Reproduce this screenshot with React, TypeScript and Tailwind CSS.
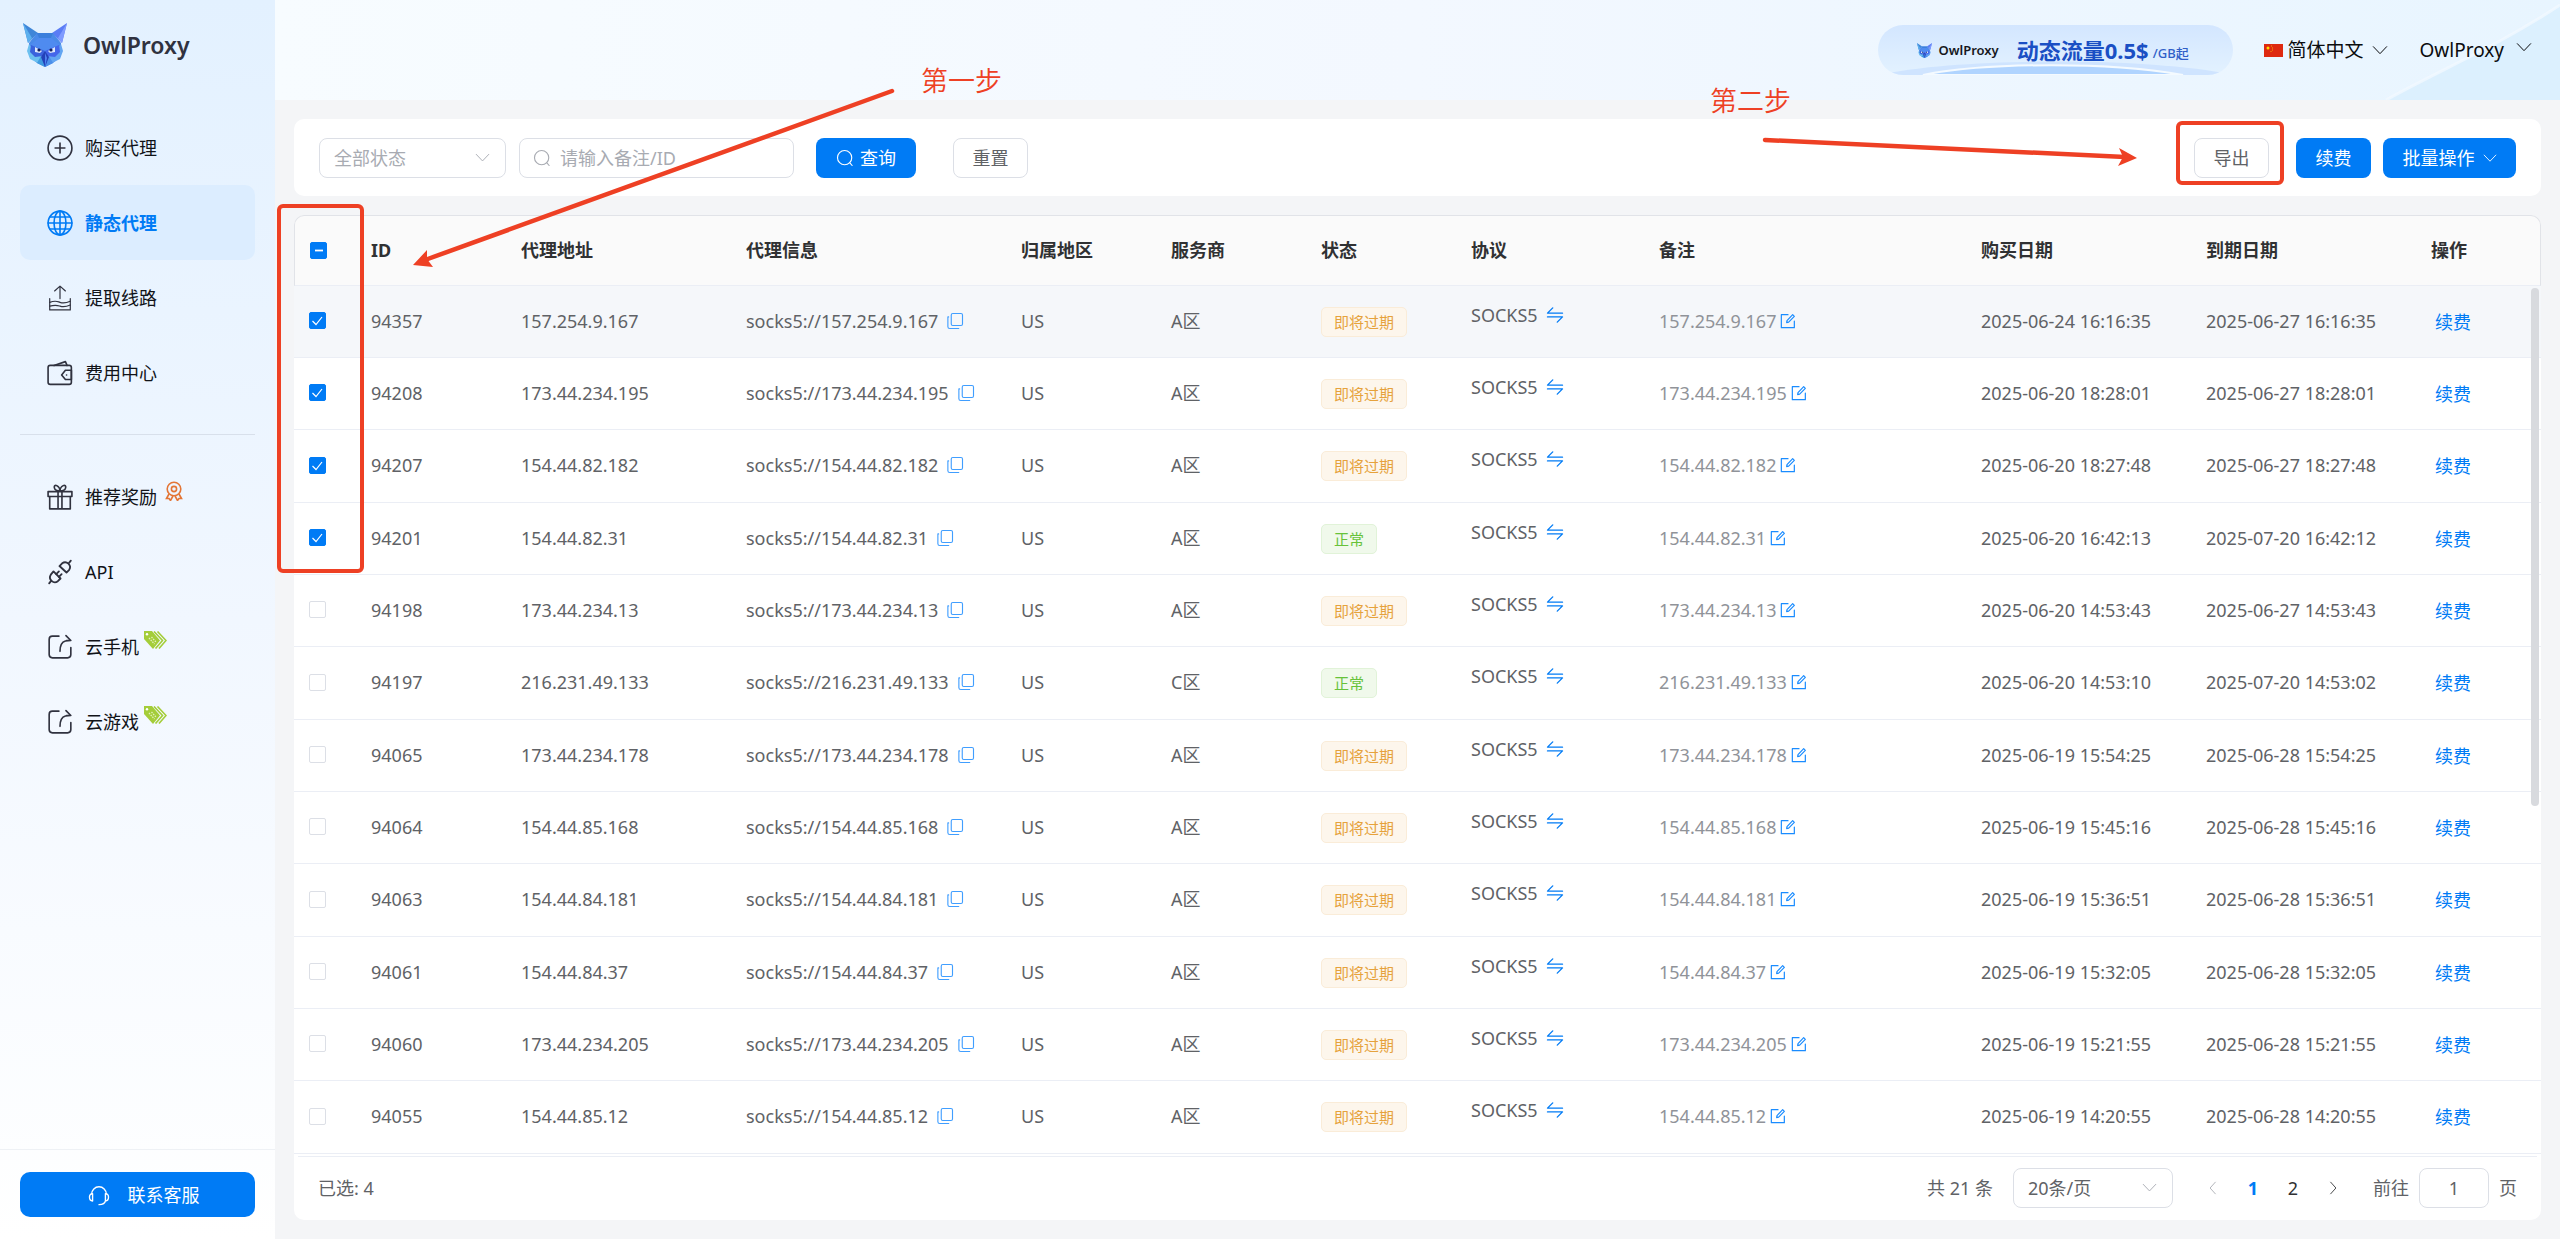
import clsx from "clsx";
import { useState } from "react";
import type { ReactNode } from "react";

type Status = "expiring" | "normal";

interface Proxy {
  id: number;
  ip: string;
  zone: string;
  status: Status;
  bought: string;
  expires: string;
}

const PROXIES: Proxy[] = [
  { id: 94357, ip: "157.254.9.167", zone: "A区", status: "expiring", bought: "2025-06-24 16:16:35", expires: "2025-06-27 16:16:35" },
  { id: 94208, ip: "173.44.234.195", zone: "A区", status: "expiring", bought: "2025-06-20 18:28:01", expires: "2025-06-27 18:28:01" },
  { id: 94207, ip: "154.44.82.182", zone: "A区", status: "expiring", bought: "2025-06-20 18:27:48", expires: "2025-06-27 18:27:48" },
  { id: 94201, ip: "154.44.82.31", zone: "A区", status: "normal", bought: "2025-06-20 16:42:13", expires: "2025-07-20 16:42:12" },
  { id: 94198, ip: "173.44.234.13", zone: "A区", status: "expiring", bought: "2025-06-20 14:53:43", expires: "2025-06-27 14:53:43" },
  { id: 94197, ip: "216.231.49.133", zone: "C区", status: "normal", bought: "2025-06-20 14:53:10", expires: "2025-07-20 14:53:02" },
  { id: 94065, ip: "173.44.234.178", zone: "A区", status: "expiring", bought: "2025-06-19 15:54:25", expires: "2025-06-28 15:54:25" },
  { id: 94064, ip: "154.44.85.168", zone: "A区", status: "expiring", bought: "2025-06-19 15:45:16", expires: "2025-06-28 15:45:16" },
  { id: 94063, ip: "154.44.84.181", zone: "A区", status: "expiring", bought: "2025-06-19 15:36:51", expires: "2025-06-28 15:36:51" },
  { id: 94061, ip: "154.44.84.37", zone: "A区", status: "expiring", bought: "2025-06-19 15:32:05", expires: "2025-06-28 15:32:05" },
  { id: 94060, ip: "173.44.234.205", zone: "A区", status: "expiring", bought: "2025-06-19 15:21:55", expires: "2025-06-28 15:21:55" },
  { id: 94055, ip: "154.44.85.12", zone: "A区", status: "expiring", bought: "2025-06-19 14:20:55", expires: "2025-06-28 14:20:55" },
];

const HEADINGS = ["ID", "代理地址", "代理信息", "归属地区", "服务商", "状态", "协议", "备注", "购买日期", "到期日期", "操作"];

function Icon({ className, size = 24, stroke = 1.5, children }: { className?: string; size?: number; stroke?: number; children: ReactNode }) {
  return (
    <svg
      className={clsx("shrink-0", className)}
      width={size}
      height={size}
      viewBox="0 0 24 24"
      fill="none"
      stroke="currentColor"
      strokeWidth={stroke}
      strokeLinecap="round"
      strokeLinejoin="round"
      aria-hidden="true"
    >
      {children}
    </svg>
  );
}

function OwlLogo({ className }: { className?: string }) {
  return (
    <svg className={className} viewBox="0 0 44 44" aria-hidden="true">
      <path d="M0 0 15 10 5 20Z" fill="#3f86d8" />
      <path d="M0 0 9 15 5 20Z" fill="#5cb0ee" />
      <path d="M44 0 29 10 39 20Z" fill="#5a7cf5" />
      <path d="M44 0 35 15 39 20Z" fill="#7f9bff" />
      <path d="M14 10H30L38 20 38 33 30 40 22 44 14 40 6 33 6 20Z" fill="#4a8ae8" />
      <path d="M6 21 4 28 7 36 15 40 22 33 14 32Z" fill="#6cc0f0" />
      <path d="M38 21 40 28 37 36 29 40 22 33 30 32Z" fill="#62a5f2" />
      <path d="M14 10H30L28 15H16Z" fill="#3b7fdc" />
      <path d="M16 15H28L37 22 22 29 7 22Z" fill="#4f8bf0" />
      <path d="M8 22 22 28 20 33 12 34 7 29Z" fill="#3a62dc" />
      <path d="M36 22 22 28 24 33 32 34 37 29Z" fill="#4466ea" />
      <path d="M12 24 19 28 17 30 12 29Z" fill="#dfe9fb" />
      <path d="M32 24 25 28 27 30 32 29Z" fill="#dfe9fb" />
      <circle cx="16" cy="27" r="1.600" fill="#15205c" />
      <circle cx="28" cy="27" r="1.600" fill="#15205c" />
      <path d="M14 40 18 33 22 44Z" fill="#3f9be0" />
      <path d="M30 40 26 33 22 44Z" fill="#4b8fea" />
      <path d="M22 28 26 34 22 44 18 34Z" fill="#2341b8" />
      <path d="M22 30 24 35 22 44Z" fill="#4f83f0" />
    </svg>
  );
}

function ChevronDown({ size = 16, className }: { size?: number; className?: string }) {
  return (
    <Icon size={size} stroke={1.5} className={className}>
      <path d="M2 7 12 17.500 22 7" />
    </Icon>
  );
}

function SearchIcon({ size = 18, className }: { size?: number; className?: string }) {
  return (
    <Icon size={size} className={className}>
      <circle cx="11.500" cy="11.500" r="9.500" />
      <path d="M18.500 18.500 21.500 22" />
    </Icon>
  );
}

function CopyIcon() {
  return (
    <Icon size={18} stroke={1.5}>
      <rect x="7" y="2" width="15" height="16" rx="2" />
      <path d="M3.500 6.500H2.500V19.500a2.500 2.500 0 0 0 2.500 2.500H17" />
    </Icon>
  );
}

function EditIcon() {
  return (
    <Icon size={16} stroke={1.8}>
      <path d="M12 2.500H2V22H21.500V12" />
      <path d="M10 14.500 10.500 11.500 19 2.500 21.500 5 13 13.800Z" />
    </Icon>
  );
}

function SwapIcon() {
  return (
    <Icon size={18} stroke={1.8}>
      <path d="M9 2.500 2 9.500H22" />
      <path d="M2 14.500H22L15 21.500" />
    </Icon>
  );
}

const AwardBadge = (
  <svg className="absolute -top-1 left-20 h-5 w-[18px]" viewBox="0 0 18 20" fill="none" stroke="#e37536" strokeWidth="1.600" aria-hidden="true">
    <circle cx="9" cy="8" r="6.800" />
    <circle cx="9" cy="8" r="2.600" />
    <path d="M4 13 1.500 17.500H4L5.500 19.500 8 15M14 13 16.500 17.500H14L12.500 19.500 10 15" />
  </svg>
);

const SaleBadge = (
  <svg className="absolute -top-1 left-[59px] h-[18px] w-[23px]" viewBox="0 0 23 18" aria-hidden="true">
    <path d="M0 0H8L16 9.500 9 18 0 8Z" fill="#a4cd39" />
    <circle cx="3" cy="3.200" r="1.200" fill="#fff" />
    <path d="M5 7 10.500 13M7.500 6 12 11" stroke="#e2f0bd" strokeWidth="1.300" strokeDasharray="1.500 1" />
    <path d="M10 0.500 18.500 9.500 11.500 17.500M13.500 0.500 22 9.500 15 17.500" fill="none" stroke="#a4cd39" strokeWidth="1.600" />
  </svg>
);

const PRIMARY_MENU = [
  {
    label: "购买代理",
    icon: (
      <>
        <circle cx="12" cy="12" r="11" />
        <path d="M12 7.500V16.500M7.500 12H16.500" />
      </>
    ),
  },
  {
    label: "静态代理",
    active: true,
    icon: (
      <>
        <circle cx="12" cy="12" r="11" />
        <ellipse cx="12" cy="12" rx="5.500" ry="11" />
        <path d="M12 1V23M1 12H23M3 6.500H21M3 17.500H21" />
      </>
    ),
  },
  {
    label: "提取线路",
    icon: (
      <g strokeWidth="1.100">
        <path d="M12 12.500V1M7 5.500 12 1 17 5.500" />
        <path d="M2.500 12.500V23H21.500V12.500" />
        <path d="M2.500 16C8 14 9 15 12 16S18 16.500 21.500 15M2.500 19.500C8 18 9 18.500 12 19.500S18 20 21.500 18.500" />
      </g>
    ),
  },
  {
    label: "费用中心",
    icon: (
      <>
        <path d="M6.500 5 17 1.500 18.500 5" />
        <rect x="1" y="5" width="21.500" height="17.500" rx="2" />
        <path d="M22.500 9.500H17L13.500 13.800 17 18H22.500Z" />
        <path d="M18 13.800H18.100" />
      </>
    ),
  },
];

const externalIcon = (
  <>
    <path d="M11 2H5a3 3 0 0 0-3 3V19a3 3 0 0 0 3 3H19a3 3 0 0 0 3-3V12.500" />
    <path d="M17.500 1.500 22 6 17 6.500C13.500 7.500 12 10.500 12 16M22 6H18" />
  </>
);

const SECONDARY_MENU = [
  {
    label: "推荐奖励",
    badge: AwardBadge,
    icon: (
      <>
        <rect x="1" y="7" width="22" height="4.500" />
        <path d="M2.500 11.500V23H21.500V11.500M10.200 7V23M13.800 7V23" />
        <path d="M12 6.500C5 6 6 0 9 1.500 11 2.500 12 5 12 6.500 12 5 13 2.500 15 1.500 18 0 19 6 12 6.500Z" />
      </>
    ),
  },
  {
    label: "API",
    icon: (
      <g strokeWidth="1.700">
        <path d="M11.500 6.500 14 4a4.500 4.500 0 0 1 6.500 6L18 12.500ZM20 4 22 1.500" />
        <path d="M6 11.500 12.500 18 10 20.500a4.500 4.500 0 0 1-6.500-6ZM4 20 2 22.500" />
        <path d="M8.500 14 11 11.500M11 16.500 13.500 14" />
      </g>
    ),
  },
  { label: "云手机", badge: SaleBadge, icon: externalIcon },
  { label: "云游戏", badge: SaleBadge, icon: externalIcon },
];

interface MenuEntry {
  label: string;
  icon: ReactNode;
  active?: boolean;
  badge?: ReactNode;
}

function MenuItem({ label, icon, active, badge }: MenuEntry) {
  return (
    <li>
      <a
        href="#"
        className={clsx(
          "flex h-[75px] items-center gap-3 rounded-[10px] pl-[27px]",
          active ? "bg-[#dcedff] font-bold text-[#007bf5]" : "text-[#111318]",
        )}
      >
        <Icon size={26} className={active ? "" : "text-[#30323f]"}>
          {icon}
        </Icon>
        <span className="relative whitespace-nowrap">
          {label}
          {badge}
        </span>
      </a>
    </li>
  );
}

function Sidebar() {
  return (
    <aside className="flex w-[275px] shrink-0 flex-col bg-linear-to-b from-[#e3f1ff] via-[#f1f7ff] to-white">
      <div className="flex h-[90px] items-center gap-4 pl-[23px]">
        <OwlLogo className="size-11" />
        <span className="text-[23px] font-semibold text-[#30323f]">OwlProxy</span>
      </div>
      <nav className="flex-1 px-5 pt-5">
        <ul>
          {PRIMARY_MENU.map((item) => (
            <MenuItem key={item.label} {...item} />
          ))}
        </ul>
        <hr className="my-6 border-[#d8e0eb]" />
        <ul>
          {SECONDARY_MENU.map((item) => (
            <MenuItem key={item.label} {...item} />
          ))}
        </ul>
      </nav>
      <div className="border-t border-[#eef1f5] px-5 pt-[22px] pb-[22px]">
        <button className="flex h-[45px] w-full items-center justify-center gap-[18px] rounded-[10px] bg-[#007bf5] pl-3 text-white">
          <Icon size={22}>
            <path d="M4 11a8 8 0 0 1 16 0" />
            <path d="M5 10.500C0.500 10 0.500 18.500 5 18.500ZM19 10.500C23.500 10 23.500 18.500 19 18.500ZM19 18.500C18.500 21.500 16 22.500 12 22.500" />
          </Icon>
          联系客服
        </button>
      </div>
    </aside>
  );
}

function TopBar() {
  return (
    <header className="relative flex h-[100px] items-center justify-end bg-linear-to-r from-[#f7fcff] via-[#f3f8ff] to-[#e8f5ff] pr-7">
      <svg className="absolute top-0 right-0 h-full w-[180px]" viewBox="0 0 180 100" aria-hidden="true">
        <path d="M6 100C60 70 120 45 180 5V100Z" fill="#dcf0fe" />
        <path d="M6 100C60 70 120 45 180 5" fill="none" stroke="#f4faff" strokeWidth="3" opacity="0.7" />
      </svg>
      <a
        href="#"
        className="relative mr-[31px] flex h-[50px] w-[355px] items-center overflow-hidden rounded-full bg-linear-to-b from-[#d3e6ff] to-[#e3f2ff] pl-[39px]"
      >
        <svg className="absolute bottom-0 left-0 h-[14px] w-full" viewBox="0 0 355 14" aria-hidden="true">
          <path d="M0 14C80-4 275-4 355 14Z" fill="#cfe4ff" />
          <path d="M45 14C110 1 235 1 305 14Z" fill="#b0d4ff" stroke="#f4faff" strokeWidth="2" />
        </svg>
        <OwlLogo className="relative size-[15px]" />
        <span className="relative ml-1.5 text-[13px] font-semibold text-[#16181d]">OwlProxy</span>
        <span className="relative ml-[18px] text-[22px] font-bold text-[#1a4fc4]">动态流量0.5$</span>
        <span className="relative mt-1.5 ml-1 text-[13px] font-medium text-[#2f5fc8]">/GB起</span>
      </a>
      <button className="relative flex items-center gap-1 text-[19px] text-[#0b0c0e]">
        <svg className="h-[13px] w-[19px]" viewBox="0 0 19 13" aria-hidden="true">
          <rect width="19" height="13" fill="#de2910" />
          <circle cx="4" cy="4" r="1.500" fill="#ffde00" />
          <path d="M7 2H8M8 4H9M8 6H9M6.500 7.500H7.500" stroke="#ffde00" strokeWidth="0.700" />
        </svg>
        简体中文
        <ChevronDown className="ml-1" />
      </button>
      <button className="relative ml-8 flex items-center gap-3 text-[19px] text-[#0b0c0e]">
        OwlProxy
        <ChevronDown className="mb-1.5" />
      </button>
    </header>
  );
}

// Red outline that calls out the element it is placed in
function Highlight({ className }: { className: string }) {
  return <span aria-hidden="true" className={clsx("pointer-events-none absolute z-10 rounded-[6px] border-4 border-[#ee4024]", className)} />;
}

function Toolbar() {
  return (
    <section className="flex h-[77px] items-center rounded-[10px] bg-white px-[25px]">
      <label className="relative flex items-center">
        <span className="sr-only">状态</span>
        <select className="h-10 w-[187px] appearance-none rounded-[8px] border border-[#dcdfe6] bg-white px-3.5 leading-8 text-[#a8abb2]">
          <option>全部状态</option>
        </select>
        <ChevronDown size={15} className="pointer-events-none absolute right-4 text-[#a8abb2]" />
      </label>
      <label className="relative ml-[13px] flex items-center">
        <span className="sr-only">备注/ID</span>
        <SearchIcon className="absolute left-3.5 text-[#a8abb2]" />
        <input
          className="h-10 w-[275px] rounded-[8px] border border-[#dcdfe6] pl-10 leading-8 placeholder:text-[#a8abb2]"
          placeholder="请输入备注/ID"
        />
      </label>
      <button className="ml-[22px] flex h-10 w-[100px] items-center justify-center gap-1.5 rounded-[8px] bg-[#007bf5] text-white">
        <SearchIcon />
        查询
      </button>
      <button className="ml-[37px] h-10 w-[75px] rounded-[8px] border border-[#dcdfe6] text-[#606266]">重置</button>
      <div className="relative ml-auto">
        <button className="h-10 w-[75px] rounded-[8px] border border-[#dcdfe6] text-[#606266]">导出</button>
        <Highlight className="-top-[17px] -right-[15px] -bottom-[7px] -left-[18px]" />
      </div>
      <button className="ml-[27px] h-10 w-[75px] rounded-[8px] bg-[#007bf5] text-white">续费</button>
      <button className="ml-3 flex h-10 w-[133px] items-center justify-center gap-2 rounded-[8px] bg-[#007bf5] text-white">
        批量操作
        <ChevronDown size={14} />
      </button>
    </section>
  );
}

function Checkbox({ label, checked, mixed, onChange }: { label: string; checked: boolean; mixed?: boolean; onChange: () => void }) {
  const filled = checked || mixed;
  return (
    <label className="relative block size-[17px]">
      <input
        type="checkbox"
        aria-label={label}
        checked={checked}
        onChange={onChange}
        className={clsx(
          "block size-[17px] appearance-none rounded-[2px] border",
          filled ? "border-[#007bf5] bg-[#007bf5]" : "border-[#dcdfe6] bg-white",
        )}
      />
      {filled && (
        <svg className="pointer-events-none absolute inset-0" viewBox="0 0 17 17" fill="none" stroke="#fff" strokeWidth="1.200" aria-hidden="true">
          {mixed ? <path d="M5 8.500H13" strokeWidth="1.800" /> : <path d="M3.500 9 7 12.500 13 5" />}
        </svg>
      )}
    </label>
  );
}

function StatusTag({ status }: { status: Status }) {
  return (
    <span
      className={clsx(
        "inline-flex h-[30px] items-center rounded-[5px] border px-3 text-[15px]",
        status === "normal" ? "border-[#e1f3d8] bg-[#f0f9eb] text-[#67c23a]" : "border-[#faecd8] bg-[#fdf6ec] text-[#e6a23c]",
      )}
    >
      {status === "normal" ? "正常" : "即将过期"}
    </span>
  );
}

function ProxyTable({ selected, onToggle, onToggleAll }: { selected: number[]; onToggle: (id: number) => void; onToggleAll: () => void }) {
  return (
    <table className="w-full table-fixed border-separate border-spacing-0 text-left">
      <colgroup>
        <col className="w-[65px]" />
        <col className="w-[150px]" />
        <col className="w-[225px]" />
        <col className="w-[275px]" />
        <col className="w-[150px]" />
        <col className="w-[150px]" />
        <col className="w-[150px]" />
        <col className="w-[188px]" />
        <col />
        <col className="w-[225px]" />
        <col className="w-[225px]" />
        <col className="w-[122px]" />
      </colgroup>
      <thead>
        <tr className="h-[71px] text-[#303133] *:border-t *:border-b *:border-t-[#e1e3e8] *:border-b-[#ebeef5] *:bg-[#fafafa]">
          <th className="rounded-tl-[10px] border-l border-l-[#e1e3e8] pl-[15px]">
            <Checkbox
              label="全选"
              checked={selected.length === PROXIES.length}
              mixed={selected.length > 0 && selected.length < PROXIES.length}
              onChange={onToggleAll}
            />
          </th>
          {HEADINGS.map((heading) => (
            <th key={heading} className="px-3 pb-0.5 font-bold last:rounded-tr-[10px] last:border-r last:border-r-[#e1e3e8]">
              {heading}
            </th>
          ))}
        </tr>
      </thead>
      <tbody>
        {PROXIES.map((proxy) => (
          <tr
            key={proxy.id}
            className="h-[72px] text-[#606266] *:border-b *:border-[#ebeef5] *:px-3 *:pb-0.5 *:whitespace-nowrap first:bg-[#f5f7fa] nth-[3n]:h-[73px]"
          >
            <td>
              <div className="pl-[3px]">
                <Checkbox label={`选择 ${proxy.id}`} checked={selected.includes(proxy.id)} onChange={() => onToggle(proxy.id)} />
              </div>
            </td>
            <td>{proxy.id}</td>
            <td>{proxy.ip}</td>
            <td>
              <div className="flex items-center gap-2">
                socks5://{proxy.ip}
                <button aria-label="复制" className="text-[#409eff]">
                  <CopyIcon />
                </button>
              </div>
            </td>
            <td>US</td>
            <td>{proxy.zone}</td>
            <td>
              <div className="flex pt-0.5">
                <StatusTag status={proxy.status} />
              </div>
            </td>
            <td>
              <div className="flex items-center gap-2 pb-3">
                SOCKS5
                <button aria-label="切换协议" className="text-[#007bf5]">
                  <SwapIcon />
                </button>
              </div>
            </td>
            <td>
              <div className="flex items-center gap-1 text-[#909399]">
                {proxy.ip}
                <button aria-label="编辑备注" className="text-[#1a8cff]">
                  <EditIcon />
                </button>
              </div>
            </td>
            <td>{proxy.bought}</td>
            <td>{proxy.expires}</td>
            <td>
              <a href="#" className="block pt-0.5 pl-1 text-[#007bf5]">
                续费
              </a>
            </td>
          </tr>
        ))}
      </tbody>
    </table>
  );
}

function Pagination({ count }: { count: number }) {
  return (
    <footer className="mx-1 flex h-16 items-center border-t border-[#ebeef5] px-5 pb-0.5 text-[#606266]">
      <span>已选: {count}</span>
      <span className="ml-auto">共 21 条</span>
      <label className="relative ml-5 flex items-center">
        <span className="sr-only">每页条数</span>
        <select className="h-10 w-[160px] appearance-none rounded-[8px] border border-[#dcdfe6] bg-white px-3.5 leading-8 text-[#606266]">
          <option>20条/页</option>
        </select>
        <ChevronDown size={15} className="pointer-events-none absolute right-4 text-[#a8abb2]" />
      </label>
      <nav className="ml-5 flex items-center">
        <button aria-label="上一页" className="flex w-10 justify-center text-[#a8abb2]">
          <Icon size={14}>
            <path d="M16 2 7 12 16 22" />
          </Icon>
        </button>
        <button className="w-10 font-bold text-[#007bf5]">1</button>
        <button className="w-10 text-[#303133]">2</button>
        <button aria-label="下一页" className="flex w-10 justify-center text-[#303133]">
          <Icon size={14}>
            <path d="M8 2 17 12 8 22" />
          </Icon>
        </button>
      </nav>
      <label className="ml-5 flex items-center gap-2.5">
        前往
        <input className="h-10 w-[70px] rounded-[8px] border border-[#dcdfe6] text-center leading-8" defaultValue="1" />
        页
      </label>
    </footer>
  );
}

function StepGuide() {
  return (
    <div className="pointer-events-none absolute inset-0 z-20 text-[27px] leading-none font-[350] text-[#ee4024]">
      <svg className="absolute top-0 left-0 h-full w-full" fill="none" stroke="#ee4024" strokeWidth="4.500" strokeLinecap="round" aria-hidden="true">
        <path d="M892 91 425 260" />
        <path d="M413 265 427 250 427 259 433 267Z" fill="#ee4024" stroke="none" />
        <path d="M1765 140 2125 157" />
        <path d="M2137 158 2119 148 2123 157 2118 166Z" fill="#ee4024" stroke="none" />
      </svg>
      <span className="absolute top-[67px] left-[921px]">第一步</span>
      <span className="absolute top-[87px] left-[1710px]">第二步</span>
    </div>
  );
}

export default function App() {
  const [selected, setSelected] = useState([94357, 94208, 94207, 94201]);

  const toggle = (id: number) =>
    setSelected((ids) => (ids.includes(id) ? ids.filter((other) => other !== id) : [...ids, id]));

  const toggleAll = () => setSelected((ids) => (ids.length === PROXIES.length ? [] : PROXIES.map((proxy) => proxy.id)));

  return (
    <div className="relative flex min-h-screen bg-[#f4f5f7] font-['Noto_Sans','Noto_Sans_CJK_SC',sans-serif] text-[18px] leading-6">
      <Sidebar />
      <div className="flex min-w-0 flex-1 flex-col">
        <TopBar />
        <main className="flex flex-1 flex-col gap-[19px] p-[19px]">
          <Toolbar />
          <section className="relative rounded-[10px] bg-white">
            <Highlight className="-top-[11px] -left-[17px] h-[369px] w-[87px]" />
            <ProxyTable selected={selected} onToggle={toggle} onToggleAll={toggleAll} />
            <span className="absolute top-[73px] right-0.5 h-[518px] w-2 rounded-full bg-[#d8dade]" />
            <div className="h-0.5" />
            <Pagination count={selected.length} />
          </section>
        </main>
      </div>
      <StepGuide />
    </div>
  );
}
